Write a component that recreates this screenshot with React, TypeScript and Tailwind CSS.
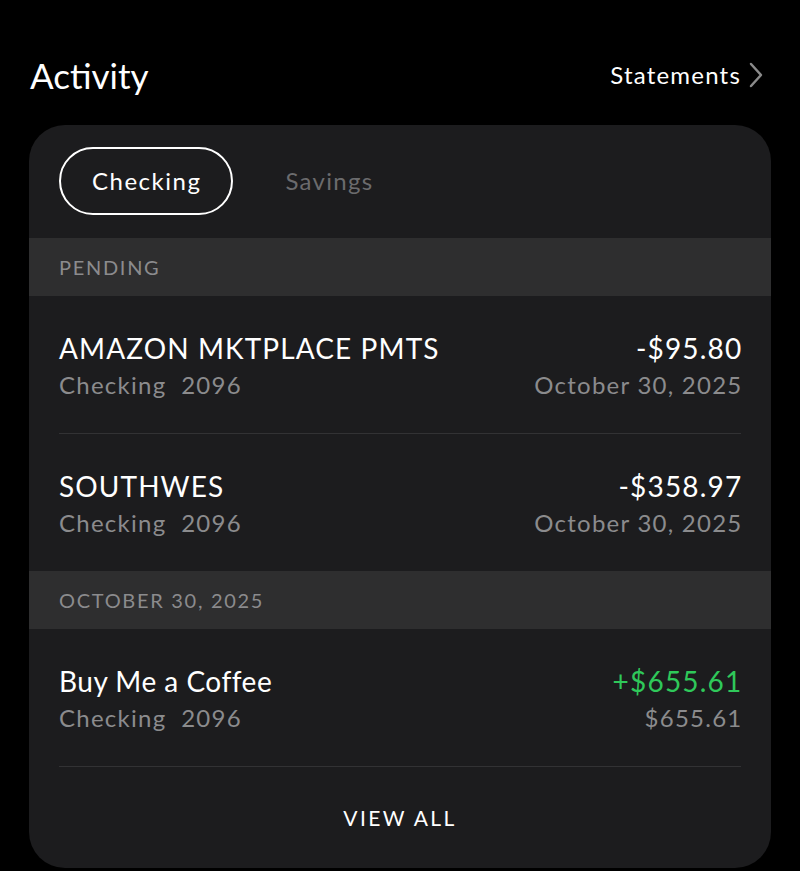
import React from "react";

type Tx = { name: string; sub: string; amount: string; date: string; positive?: boolean };

const pending: Tx[] = [
  { name: "AMAZON MKTPLACE PMTS", sub: "Checking\u00a0\u00a02096", amount: "-$95.80", date: "October 30, 2025" },
  { name: "SOUTHWES", sub: "Checking\u00a0\u00a02096", amount: "-$358.97", date: "October 30, 2025" },
];
const posted: Tx[] = [
  { name: "Buy Me a Coffee", sub: "Checking\u00a0\u00a02096", amount: "+$655.61", date: "$655.61", positive: true },
];

function Row({ tx, divider }: { tx: Tx; divider: boolean }) {
  return (
    <div className="px-[30px]">
      <div className={`flex justify-between pt-[36px] pb-[33px] ${divider ? "border-b border-[#323234]" : ""}`}>
        <div className="flex flex-col gap-[6px]">
          <div className={`text-[28px] leading-[32px] text-white ${tx.positive ? "tracking-[0.5px]" : "tracking-[1.1px]"}`}>{tx.name}</div>
          <div className="text-[24px] leading-[30px] tracking-[1.25px] text-[#8b8b8d]">{tx.sub}</div>
        </div>
        <div className="flex flex-col items-end gap-[6px] -mr-[1.5px]">
          <div className={`text-[28px] leading-[32px] tracking-[1.2px] ${tx.positive ? "text-[#2fc85a]" : "text-white"}`}>{tx.amount}</div>
          <div className="text-[24px] leading-[30px] tracking-[1.25px] text-[#8b8b8d]">{tx.date}</div>
        </div>
      </div>
    </div>
  );
}

function Header({ label }: { label: string }) {
  return (
    <div className="h-[58px] bg-[#2e2e2f] px-[30px] flex items-center text-[20px] tracking-[1.7px] text-[#8b8b8d]">
      {label}
    </div>
  );
}

export default function App() {
  return (
    <div className="min-h-[871px] w-[800px] bg-black pb-[3px]" style={{ fontFamily: "Lato, 'Noto Sans', sans-serif" }}>
      <div className="flex items-center justify-between pl-[30px] pr-[36px] pt-[52px] pb-[27px]">
        <div className="text-[35px] leading-[46px] text-white">Activity</div>
        <div className="flex items-center gap-[7px] text-white text-[24px] tracking-[1.2px]">
          <span>Statements</span>
          <svg width="16" height="26" viewBox="0 0 16 26" fill="none">
            <path d="M3 2 L13 13 L3 24" stroke="#8a8a8a" strokeWidth="2.5" strokeLinecap="round" strokeLinejoin="round" />
          </svg>
        </div>
      </div>
      <div className="mx-[29px] rounded-[36px] bg-[#1c1c1e] overflow-hidden">
        <div className="flex items-center gap-[52px] px-[30px] pt-[22px] pb-[23px]">
          <div className="h-[68px] pl-[31px] pr-[30px] rounded-full border-2 border-white flex items-center text-[24px] tracking-[1.5px] text-white">
            Checking
          </div>
          <div className="text-[24px] tracking-[1.3px] text-[#6b6b6d]">Savings</div>
        </div>
        <Header label="PENDING" />
        {pending.map((t, i) => (
          <Row key={i} tx={t} divider={i < pending.length - 1} />
        ))}
        <Header label="OCTOBER 30, 2025" />
        {posted.map((t, i) => (
          <Row key={i} tx={t} divider={true} />
        ))}
        <div className="h-[101px] flex items-center justify-center text-[21px] tracking-[2.4px] text-white">
          VIEW ALL
        </div>
      </div>
    </div>
  );
}
